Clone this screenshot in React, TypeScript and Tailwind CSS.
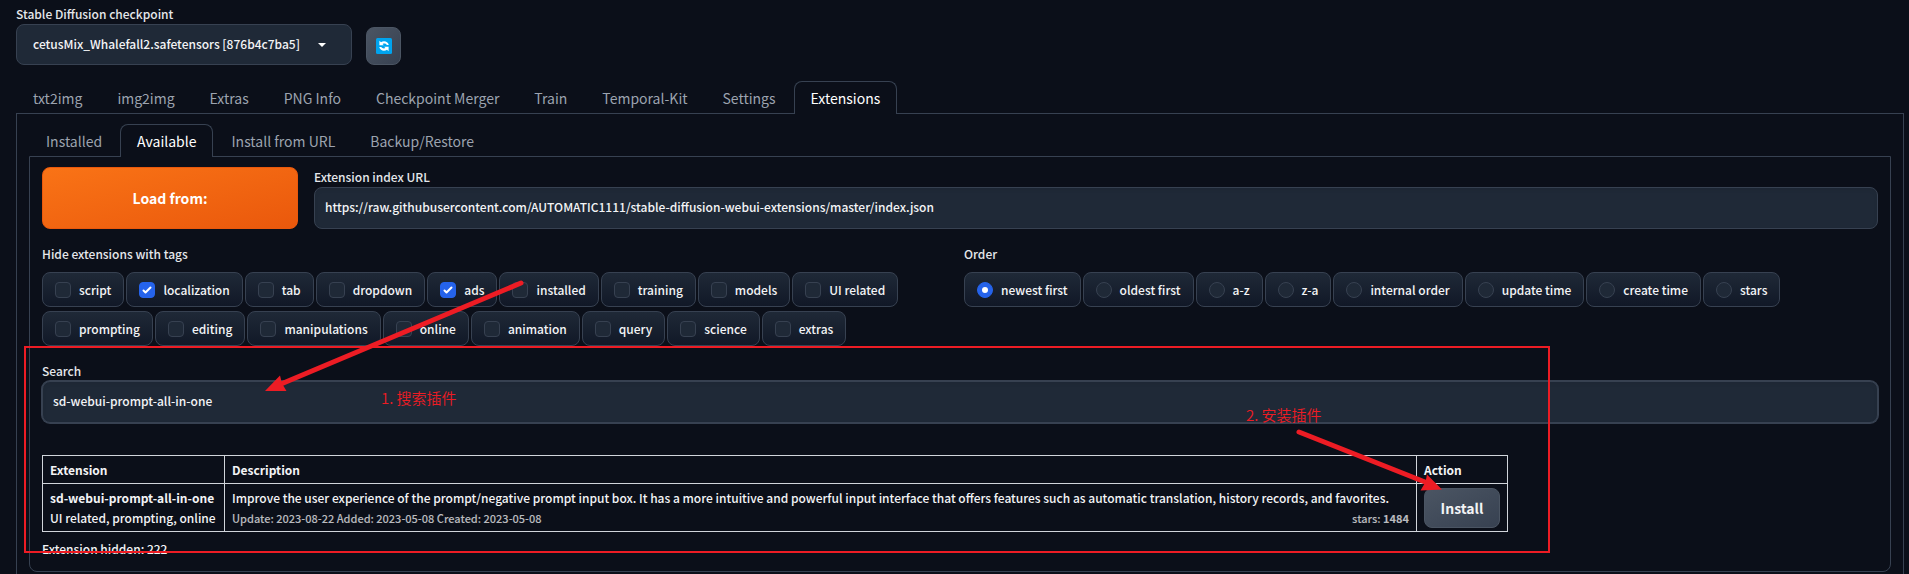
import { useState } from "react";

const mainTabs = ["txt2img", "img2img", "Extras", "PNG Info", "Checkpoint Merger", "Train", "Temporal-Kit", "Settings", "Extensions"];
const subTabs = ["Installed", "Available", "Install from URL", "Backup/Restore"];
const tags = [
  "script", "localization", "tab", "dropdown", "ads", "installed", "training", "models", "UI related",
  "prompting", "editing", "manipulations", "online", "animation", "query", "science", "extras",
];
const orders = ["newest first", "oldest first", "a-z", "z-a", "internal order", "update time", "create time", "stars"];

function Tabs({ items, active, onSelect }: { items: string[]; active: string; onSelect: (item: string) => void }) {
  return (
    <div role="tablist" className="flex gap-px">
      {items.map((item) => (
        <button
          key={item}
          role="tab"
          aria-selected={item === active}
          onClick={() => onSelect(item)}
          className={
            item === active
              ? "relative z-10 -mb-px h-[33px] rounded-t-lg border border-b-0 border-[#374151] bg-[#0b0f19] px-4 text-[14px] leading-5 text-white"
              : "h-8 rounded-t-lg border border-b-0 border-transparent px-4 text-[14px] leading-5 text-[#9ca3af]"
          }
        >
          {item}
        </button>
      ))}
    </div>
  );
}

const chip = "flex h-[35px] items-center gap-2 rounded-lg border border-[#374151] bg-linear-to-t from-[#111827] to-[#1f2937] px-3";

function TagChip({ name }: { name: string }) {
  const [checked, setChecked] = useState(name === "localization" || name === "ads");
  return (
    <label className={chip}>
      <span className="relative flex size-4">
        <input
          type="checkbox"
          checked={checked}
          onChange={(e) => setChecked(e.target.checked)}
          className="size-4 appearance-none rounded border border-[#374151] bg-[#1f2937] checked:border-[#2563eb] checked:bg-[#2563eb]"
        />
        {checked && (
          <svg viewBox="0 0 16 16" className="pointer-events-none absolute inset-0 size-4 fill-white">
            <path d="M12.207 4.793a1 1 0 010 1.414l-5 5a1 1 0 01-1.414 0l-2-2a1 1 0 011.414-1.414L6.5 9.086l4.293-4.293a1 1 0 011.414 0z" />
          </svg>
        )}
      </span>
      <span>{name}</span>
    </label>
  );
}

function OrderChip({ name }: { name: string }) {
  return (
    <label className={chip}>
      <span className="relative flex size-4">
        <input
          type="radio"
          name="order"
          defaultChecked={name === "newest first"}
          className="peer size-4 appearance-none rounded-full border border-[#374151] bg-[#1f2937] checked:border-[#2563eb] checked:bg-[#2563eb]"
        />
        <span className="pointer-events-none absolute inset-[5px] rounded-full peer-checked:bg-white" />
      </span>
      <span>{name}</span>
    </label>
  );
}

function RefreshIcon() {
  return (
    <svg viewBox="0 0 16 16" className="size-4" aria-hidden="true">
      <rect width="16" height="16" rx="1.5" fill="#00a4ef" />
      <path d="M3.4 2.8v4.4h4.4L6.6 5.9c1.5-.7 3.4-.3 4.2 1.1h2C11.9 3.6 8 2.3 5 4.3z" fill="#fff" />
      <path d="M12.6 13.2V8.8H8.2l1.2 1.3c-1.5.7-3.4.3-4.2-1.1h-2c.9 3.4 4.8 4.7 7.8 2.7z" fill="#fff" />
    </svg>
  );
}

function Annotations() {
  return (
    <div className="pointer-events-none absolute inset-0 z-20 overflow-hidden text-[15px] leading-5 font-[350] text-[#ed1c24]">
      <div className="absolute top-[346px] left-[24px] h-[207px] w-[1526px] border-2 border-[#ed1c24]" />
      <svg className="absolute inset-0 h-full w-full" fill="#ed1c24" stroke="#ed1c24">
        <path d="M521 283L281 384" strokeWidth="5" strokeLinecap="round" />
        <path d="M265 391L280 375.5L282 383.5L286.5 391Z" stroke="none" />
        <path d="M1299 432L1425 482" strokeWidth="5" strokeLinecap="round" />
        <path d="M1442 489.5L1427 474.5L1425.5 482L1420.5 490.5Z" stroke="none" />
      </svg>
      <span className="absolute top-[388px] left-[381px]">1. 搜索插件</span>
      <span className="absolute top-[405px] left-[1246px]">2. 安装插件</span>
    </div>
  );
}

export default function App() {
  const [tab, setTab] = useState("Extensions");
  const [sub, setSub] = useState("Available");
  return (
    <div className="relative flex min-h-screen flex-col bg-[#0b0f19] pr-[5px] pl-4 font-['Noto_Sans_CJK_SC',sans-serif] text-[12px] leading-5 text-[#f3f4f6]">
      <header className="flex items-end gap-[14px] pt-1 font-medium">
        <div className="flex flex-col">
          <label htmlFor="checkpoint" className="text-[#e5e7eb]">Stable Diffusion checkpoint</label>
          <div className="relative">
            <select id="checkpoint" className="h-[41px] w-[336px] appearance-none rounded-lg border border-[#374151] bg-[#1f2937] px-4 pb-px text-[#f3f4f6]">
              <option>cetusMix_Whalefall2.safetensors [876b4c7ba5]</option>
            </select>
            <svg viewBox="0 0 8 4" className="pointer-events-none absolute top-[19px] right-[26px] h-1 w-2 fill-white">
              <path d="M0 0H8L4 4Z" />
            </svg>
          </div>
        </div>
        <button aria-label="Refresh checkpoints" className="flex h-[38px] w-[35px] items-center justify-center rounded-lg border border-[#4b5563] bg-linear-to-br from-[#4b5563] to-[#374151]">
          <RefreshIcon />
        </button>
      </header>

      <div className="mt-4 flex flex-1 flex-col">
        <Tabs items={mainTabs} active={tab} onSelect={setTab} />
        <div className="flex-1 border border-b-0 border-[#374151] px-3 pt-[10px]">
          <Tabs items={subTabs} active={sub} onSelect={setSub} />
          <div className="rounded-b-lg border border-[#374151] px-3 pt-[10px] pb-3 font-medium">
            <div className="flex gap-4">
              <button className="w-64 rounded-lg border border-[#ea580c] bg-linear-to-br from-[#f97316] to-[#ea580c] text-[14px] font-bold text-white">
                Load from:
              </button>
              <div className="flex flex-1 flex-col">
                <label htmlFor="index-url" className="text-[#e5e7eb]">Extension index URL</label>
                <input
                  id="index-url"
                  defaultValue="https://raw.githubusercontent.com/AUTOMATIC1111/stable-diffusion-webui-extensions/master/index.json"
                  className="h-[42px] rounded-lg border border-[#374151] bg-[#1f2937] px-[10px] pb-[3px] shadow-inner outline-none"
                />
              </div>
            </div>

            <div className="mt-[15px] grid grid-cols-2 gap-2">
              <fieldset>
                <legend className="mb-2 text-[#e5e7eb]">Hide extensions with tags</legend>
                <div className="flex flex-wrap gap-x-[2px] gap-y-1">
                  {tags.map((t) => <TagChip key={t} name={t} />)}
                </div>
              </fieldset>
              <fieldset>
                <legend className="mb-2 text-[#e5e7eb]">Order</legend>
                <div className="flex flex-wrap gap-x-[2px] gap-y-1">
                  {orders.map((o) => <OrderChip key={o} name={o} />)}
                </div>
              </fieldset>
            </div>

            <div className="mt-[15px] flex flex-col">
              <label htmlFor="search" className="text-[#e5e7eb]">Search</label>
              <input
                id="search"
                defaultValue="sd-webui-prompt-all-in-one"
                className="h-[42px] rounded-lg border border-[#374151] bg-[#1f2937] px-[10px] pb-[3px] shadow-inner ring-1 ring-[#374151] outline-none"
              />
            </div>

            <table className="mt-8 border-collapse text-left">
              <thead>
                <tr className="h-7">
                  <th className="w-[182px] border border-[#d1d5db] px-[7px]">Extension</th>
                  <th className="w-[1192px] border border-[#d1d5db] px-[7px]">Description</th>
                  <th className="border border-[#d1d5db] px-[7px]">Action</th>
                </tr>
              </thead>
              <tbody>
                <tr className="h-12">
                  <td className="border border-[#d1d5db] px-[7px] whitespace-nowrap">
                    <a href="#sd-webui-prompt-all-in-one" className="font-bold">sd-webui-prompt-all-in-one</a>
                    <br />
                    UI related, prompting, online
                  </td>
                  <td className="border border-[#d1d5db] px-[7px]">
                    <p>
                      Improve the user experience of the prompt/negative prompt input box. It has a more intuitive and powerful input interface that offers features such as automatic translation, history records, and favorites.
                    </p>
                    <p className="flex justify-between text-[11px] opacity-75">
                      <span>Update: 2023-08-22 Added: 2023-05-08 Created: 2023-05-08</span>
                      <span>stars: <b>1484</b></span>
                    </p>
                  </td>
                  <td className="border border-[#d1d5db] px-[7px]">
                    <button className="block h-10 w-[76px] rounded-lg border border-[#4b5563] bg-linear-to-br from-[#4b5563] to-[#374151] text-[14px] font-bold">
                      Install
                    </button>
                  </td>
                </tr>
              </tbody>
            </table>
            <p className="mt-[7px]">Extension hidden: 222</p>
          </div>
        </div>
      </div>
      <Annotations />
    </div>
  );
}
